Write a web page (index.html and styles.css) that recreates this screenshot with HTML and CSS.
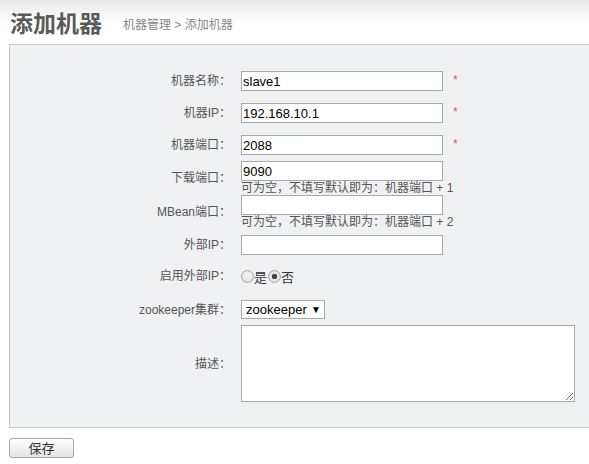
FILE: index.html
```html
<!DOCTYPE html>
<html lang="zh-CN">
<head>
<meta charset="utf-8">
<title>添加机器</title>
<link rel="stylesheet" href="styles.css">
</head>
<body>
<div class="header">
  <h1 class="title">添加机器</h1>
  <span class="crumb">机器管理 &gt; 添加机器</span>
</div>
<div class="panel">
  <form class="form">
    <div class="row r1">
      <label class="label">机器名称：</label>
      <div class="field"><div class="line"><input class="text" type="text" value="slave1"><span class="star">*</span></div></div>
    </div>
    <div class="row r2">
      <label class="label">机器IP：</label>
      <div class="field"><div class="line"><input class="text" type="text" value="192.168.10.1"><span class="star">*</span></div></div>
    </div>
    <div class="row r3">
      <label class="label">机器端口：</label>
      <div class="field"><div class="line"><input class="text" type="text" value="2088"><span class="star">*</span></div></div>
    </div>
    <div class="row r4">
      <label class="label">下载端口：</label>
      <div class="field"><input class="text" type="text" value="9090"><div class="hint">可为空，不填写默认即为：机器端口 + 1</div></div>
    </div>
    <div class="row r5">
      <label class="label">MBean端口：</label>
      <div class="field"><input class="text" type="text" value=""><div class="hint">可为空，不填写默认即为：机器端口 + 2</div></div>
    </div>
    <div class="row r6">
      <label class="label">外部IP：</label>
      <div class="field"><input class="text" type="text" value=""></div>
    </div>
    <div class="row r7">
      <label class="label">启用外部IP：</label>
      <div class="field radios">
        <input class="radio" type="radio" name="ext"><span class="rtext">是</span>
        <input class="radio" type="radio" name="ext" checked><span class="rtext">否</span>
      </div>
    </div>
    <div class="row r8">
      <label class="label">zookeeper集群：</label>
      <div class="field">
        <span class="select"><select class="sel"><option>zookeeper</option></select><span class="arrow">▼</span></span>
      </div>
    </div>
    <div class="row r9">
      <label class="label">描述：</label>
      <div class="field"><textarea class="area"></textarea></div>
    </div>
  </form>
</div>
<div class="actions">
  <button class="btn" type="button">保存</button>
</div>
</body>
</html>
```
FILE: styles.css
```css
html, body {
  margin: 0;
  padding: 0;
  overflow: hidden;
}
body {
  font-family: "Liberation Sans", Arial, "Noto Sans CJK SC", sans-serif;
  font-size: 12px;
  color: #555;
  background: #fff;
  width: 589px;
}
.header {
  height: 44px;
  display: flex;
  align-items: center;
  padding-left: 10px;
  background: linear-gradient(to bottom, #e8e8e8 0, #ffffff 22px);
}
.title {
  margin: 0;
  font-size: 23px;
  font-weight: bold;
  color: #5a5a5a;
  font-family: "Noto Sans CJK SC", sans-serif;
  line-height: 30px;
}
.crumb {
  margin-left: 21px;
  margin-top: 2px;
  color: #888;
  font-size: 12px;
  font-family: "Liberation Sans", "Noto Sans CJK SC", sans-serif;
}
.panel {
  box-sizing: border-box;
  margin-left: 9px;
  width: 581px;
  border: 1px solid #c8c8c8;
  background: #f0f1f3;
  padding: 26px 0 25px 0;
}
.form {
  margin: 0;
  display: flex;
  flex-direction: column;
}
.row {
  display: flex;
  align-items: center;
}
.label {
  flex: none;
  width: 221px;
  margin-right: 10px;
  text-align: right;
  color: #555;
  font-size: 12px;
  line-height: 14px;
}
.field {
  display: flex;
  flex-direction: column;
}
.line {
  display: flex;
  align-items: center;
}
.text {
  box-sizing: border-box;
  width: 202px;
  height: 20px;
  margin: 0;
  padding: 0 1px;
  border: 1px solid #a9a9a9;
  background: #fff;
  font-family: "Liberation Sans", Arial, sans-serif;
  font-size: 13px;
  color: #000;
  outline: none;
}
.star {
  margin-left: 10px;
  color: #f04a5a;
  font-size: 12px;
  line-height: 12px;
  margin-top: -2px;
}
.hint {
  height: 14px;
  line-height: 14px;
  font-size: 12px;
  color: #555;
}
.r2, .r3 { margin-top: 12px; }
.r4 { margin-top: 6px; }
.r5 { margin-top: 0; }
.r6 { margin-top: 6px; }
.r7 { margin-top: 11px; height: 20px; }
.r8 { margin-top: 14px; }
.r9 { margin-top: 6px; }
.radios {
  flex-direction: row;
  align-items: center;
}
.radio {
  appearance: none;
  -webkit-appearance: none;
  box-sizing: border-box;
  margin: 0;
  width: 13px;
  height: 13px;
  border: 1px solid #a8a8a8;
  border-radius: 50%;
  background: radial-gradient(circle at 50% 40%, #f4f4f4 0, #dcdcdc 100%);
}
.radio:checked {
  background: radial-gradient(circle, #444 0, #444 2.5px, #e6e6e6 3px, #d8d8d8 100%);
}
.rtext {
  font-size: 13px;
  color: #333;
  margin-right: 1px;
}
.select {
  box-sizing: border-box;
  width: 84px;
  height: 19px;
  display: flex;
  align-items: center;
  border: 1px solid #a9a9a9;
  background: #fff;
}
.sel {
  appearance: none;
  -webkit-appearance: none;
  border: 0;
  background: transparent;
  margin: 0;
  padding: 0 0 0 4px;
  font-family: "Liberation Sans", Arial, sans-serif;
  font-size: 13px;
  color: #000;
  width: 67px;
  height: 17px;
  outline: none;
}
.arrow {
  font-size: 10px;
  color: #000;
  margin-left: 2px;
}
.area {
  box-sizing: border-box;
  width: 334px;
  height: 77px;
  margin: 0;
  border: 1px solid #a9a9a9;
  background: #fff;
  display: block;
}
.actions {
  padding: 10px 0 0 9px;
}
.btn {
  box-sizing: border-box;
  width: 65px;
  height: 20px;
  margin: 0;
  padding: 0;
  border: 1px solid #a6a6a6;
  border-radius: 3px;
  background: linear-gradient(to bottom, #ffffff, #e4e4e4);
  font-family: "Noto Sans CJK SC", sans-serif;
  font-size: 13px;
  line-height: 18px;
  color: #333;
}
```
